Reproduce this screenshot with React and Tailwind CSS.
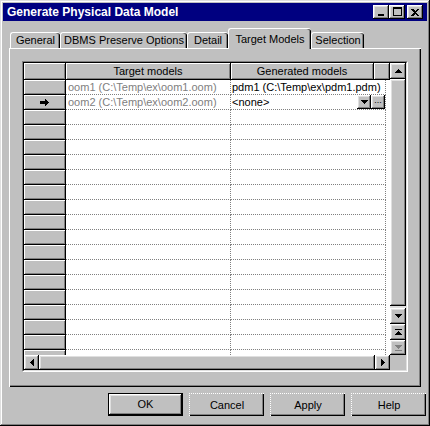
import React from "react";

// Win95 bevel looks
const raised =
  "bg-[#c0c0c0] shadow-[inset_-1px_-1px_0_#000,inset_1px_1px_0_#fff,inset_-2px_-2px_0_#808080,inset_2px_2px_0_#dfdfdf]";
const headCell =
  "bg-[#c0c0c0] border-r border-b border-black shadow-[inset_1px_1px_0_#fff,inset_-1px_-1px_0_#808080]";

const Tri = ({ dir, color = "#000" }) => {
  const d = {
    up: "M3.5 0 7 4H0z",
    down: "M0 0h7L3.5 4z",
    left: "M4 0v7L0 3.5z",
    right: "M0 0v7l4-3.5z",
  }[dir];
  const w = dir === "up" || dir === "down" ? 7 : 4;
  const h = dir === "up" || dir === "down" ? 4 : 7;
  return (
    <svg width={w} height={h} viewBox={`0 0 ${w} ${h}`} shapeRendering="crispEdges">
      <path d={d} fill={color} />
    </svg>
  );
};

const ScrollBtn = ({ dir, className = "" }) => (
  <div className={`${raised} flex items-center justify-center ${className}`}>
    <Tri dir={dir} />
  </div>
);

const TitleButton = ({ children, className = "" }) => (
  <div className={`${raised} w-[16px] h-[14px] flex items-center justify-center ${className}`}>
    {children}
  </div>
);

const Tab = ({ label, width, active }) =>
  active ? (
    <div
      className={`relative z-10 -mb-px h-[21px] ${width} bg-[#c0c0c0] rounded-t-[3px] border-t border-l border-white shadow-[inset_-1px_0_0_#000,inset_-2px_0_0_#808080] flex items-start justify-center pt-[2px]`}
    >
      {label}
    </div>
  ) : (
    <div
      className={`h-[16px] ${width} bg-[#c0c0c0] rounded-t-[3px] border-t border-l border-white shadow-[inset_-1px_0_0_#000,inset_-2px_0_0_#808080] flex items-center justify-center`}
    >
      {label}
    </div>
  );

const rows = Array.from({ length: 19 }, (_, i) => i);

const DataRow = ({ i }) => {
  const col1 = i === 0 ? "oom1 (C:\\Temp\\ex\\oom1.oom)" : i === 1 ? "oom2 (C:\\Temp\\ex\\oom2.oom)" : "";
  return (
    <div className="flex h-[15px] shrink-0">
      <div className={`${headCell} w-[42px] h-[15px] flex items-center justify-center`}>
        {i === 1 && (
          <svg width="9" height="7" viewBox="0 0 9 7" shapeRendering="crispEdges">
            <path d="M0 2h5V0l4 3.5-4 3.5V5H0z" fill="#000" />
          </svg>
        )}
      </div>
      <div className="w-[165px] h-[15px] bg-white border-b border-r border-dotted border-[#808080] pl-[2px] text-[#808080] leading-[14px] whitespace-nowrap overflow-hidden">
        {col1}
      </div>
      <div className="w-[155px] h-[15px] bg-white border-b border-r border-dotted border-[#808080] pl-[1px] leading-[14px] whitespace-nowrap overflow-hidden flex items-start">
        {i === 0 && <span>pdm1 (C:\Temp\ex\pdm1.pdm)</span>}
        {i === 1 && (
          <>
            <span className="flex-1">&lt;none&gt;</span>
            <div className={`${raised} w-[14px] h-[14px] flex items-center justify-center`}>
              <Tri dir="down" />
            </div>
            <div className={`${raised} w-[14px] h-[14px] flex items-center justify-center text-[9px] leading-none pb-[3px]`}>
              ...
            </div>
          </>
        )}
      </div>
      <div className="w-[4px] h-[15px] bg-white" />
    </div>
  );
};

export default function App() {
  return (
    <div className="w-[430px] h-[426px] bg-[#c0c0c0] p-[3px] flex flex-col font-['Liberation_Sans',Arial,sans-serif] text-[11px] text-black shadow-[inset_-1px_-1px_0_#000,inset_1px_1px_0_#dfdfdf,inset_-2px_-2px_0_#808080,inset_2px_2px_0_#fff]">
      {/* title bar */}
      <div className="h-[18px] bg-[#000080] flex items-center pl-[4px] pr-[4px]">
        <span className="flex-1 text-white font-bold text-[12px] leading-none">
          Generate Physical Data Model
        </span>
        <TitleButton>
          <div className="w-[6px] h-[2px] bg-black mt-[6px] -ml-[1px]" />
        </TitleButton>
        <TitleButton>
          <div className="w-[9px] h-[9px] border border-black border-t-2 -mt-px" />
        </TitleButton>
        <TitleButton className="ml-[2px]">
          <svg width="8" height="7" viewBox="0 0 8 7" shapeRendering="crispEdges">
            <path d="M0 0h2l2 2 2-2h2L5 3.5 8 7H6L4 5 2 7H0l3-3.5z" fill="#000" />
          </svg>
        </TitleButton>
      </div>

      {/* tabs */}
      <div className="mt-[8px] h-[19px] flex items-end pl-[7px]">
        <Tab label="General" width="w-[50px]" />
        <Tab label="DBMS Preserve Options" width="w-[127px]" />
        <Tab label="Detail" width="w-[41px]" />
        <Tab label="Target Models" width="w-[83px]" active />
        <Tab label="Selection" width="w-[53px]" />
      </div>

      {/* panel */}
      <div className="ml-[6px] w-[412px] h-[339px] bg-[#c0c0c0] border-t border-l border-white shadow-[inset_-1px_-1px_0_#000,inset_-2px_-2px_0_#808080] pt-[12px] pl-[12px]">
        <div className="w-[386px] h-[311px] border-t border-l border-[#808080] border-r border-b border-r-white border-b-white">
          <div className="w-[384px] h-[309px] border-t border-l border-black border-r border-b border-r-[#dfdfdf] border-b-[#dfdfdf] flex flex-col bg-white">
            <div className="flex h-[292px]">
              {/* table */}
              <div className="w-[366px] flex flex-col overflow-hidden bg-white">
                <div className="flex h-[17px] shrink-0">
                  <div className={`${headCell} w-[42px] h-[17px]`} />
                  <div className={`${headCell} w-[165px] h-[17px] flex items-center justify-center`}>
                    Target models
                  </div>
                  <div className={`${headCell} w-[143px] h-[17px] flex items-center justify-center`}>
                    Generated models
                  </div>
                  <div className={`${headCell} w-[16px] h-[17px]`} />
                </div>
                {rows.map((i) => (
                  <DataRow key={i} i={i} />
                ))}
              </div>
              {/* vertical scrollbar */}
              <div className="w-[16px] flex flex-col bg-[#dfdfdf]">
                <ScrollBtn dir="up" className="h-[16px]" />
                <div className={`${raised} h-[227px]`} />
                <div className="h-[2px]" />
                <ScrollBtn dir="down" className="h-[16px]" />
                <div className={`${raised} h-[16px] flex flex-col items-center justify-center gap-[1px]`}>
                  <div className="w-[7px] h-[1px] bg-black" />
                  <Tri dir="up" />
                </div>
                <div className={`${raised} h-[15px] flex flex-col items-center justify-center gap-[1px]`}>
                  <Tri dir="down" color="#808080" />
                  <div className="w-[7px] h-[1px] bg-[#808080]" />
                </div>
              </div>
            </div>
            {/* horizontal scrollbar */}
            <div className="flex h-[15px] bg-[#c0c0c0]">
              <ScrollBtn dir="left" className="w-[15px]" />
              <div className={`${raised} w-[336px]`} />
              <ScrollBtn dir="right" className="w-[15px]" />
              <div className="w-[16px] bg-[#c0c0c0]" />
            </div>
          </div>
        </div>
      </div>

      {/* buttons */}
      <div className="mt-[6px] flex justify-end gap-[6px] pr-[1px]">
        <div className="w-[75px] h-[23px] border border-black">
          <div className={`${raised} w-full h-full flex items-center justify-center`}>OK</div>
        </div>
        {["Cancel", "Apply", "Help"].map((t) => (
          <div
            key={t}
            className="w-[75px] h-[23px] bg-[#c0c0c0] border-t border-l border-dotted border-white shadow-[inset_-1px_-1px_0_#000,inset_-2px_-2px_0_#808080] flex items-center justify-center"
          >
            {t}
          </div>
        ))}
      </div>
    </div>
  );
}
